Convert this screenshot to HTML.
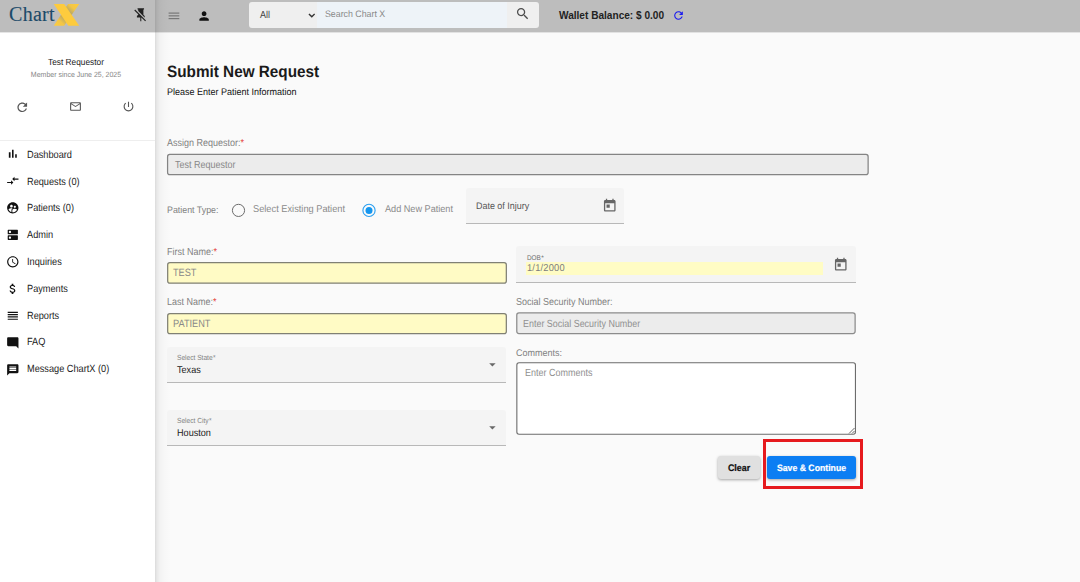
<!DOCTYPE html>
<html><head><meta charset="utf-8">
<style>
*{box-sizing:border-box;margin:0;padding:0}
html,body{width:1080px;height:582px;overflow:hidden;background:#fafafa;font-family:"Liberation Sans",sans-serif;color:#222}
.abs{position:absolute}
#top{position:absolute;left:0;top:0;width:1080px;height:33px;background:linear-gradient(#bdbdbd 0,#bdbdbd 32px,#e2e2e2 32px,#e2e2e2 33px)}
#side{position:absolute;left:0;top:32px;width:155px;height:550px;background:#fff}
#sidetop{position:absolute;left:0;top:0;width:155px;height:33px;background:linear-gradient(#bdbdbd 0,#bdbdbd 32px,#e5e5e5 32px,#e5e5e5 33px)}
#sh{position:absolute;left:155px;top:0;width:16px;height:582px;background:linear-gradient(to right,rgba(0,0,0,.125) 0,rgba(0,0,0,.07) 2px,rgba(0,0,0,.03) 5px,rgba(0,0,0,.01) 10px,rgba(0,0,0,0) 16px)}
.t{position:absolute;white-space:nowrap;line-height:1;transform:scaleY(1.07) rotate(0.03deg);transform-origin:0 85%}
svg{position:absolute;display:block}
.nav{font-size:9.200px;color:#1c1c1c;left:27px;transform:scaleY(1.13) rotate(0.03deg)}
.lbl{font-size:9px;color:#818181;transform:scaleY(1.12) rotate(0.03deg)}
.red{color:#e53935}
.inp{position:absolute;border:1px solid #767676;border-radius:2px;height:21px}
</style></head><body>
<div id="top"></div>
<div id="side"></div>
<div id="sidetop"></div>
<div id="sh"></div>

<!-- logo -->
<div class="t" style="transform:none;left:9px;top:4px;font-family:'Liberation Serif',serif;font-size:20px;color:#1b4a69;letter-spacing:0.3px;-webkit-text-stroke:0.120px #1b4a69">Chart</div>
<svg style="left:53px;top:3px" width="28" height="24" viewBox="53 3 28 24"><defs><linearGradient id="g1" gradientUnits="userSpaceOnUse" x1="56" y1="25.800" x2="77" y2="3.500"><stop offset="0" stop-color="#fdcb3e"/><stop offset=".2" stop-color="#f3c646"/><stop offset=".42" stop-color="#a9a070"/><stop offset=".58" stop-color="#a9a070"/><stop offset=".8" stop-color="#f3c646"/><stop offset="1" stop-color="#fdcb3e"/></linearGradient></defs><path d="M53.750 25.800 L68 3.900 L79.200 3.900 L64.200 25.800 Z" fill="url(#g1)"/><path d="M53.750 3.900 L64.200 3.900 L79.200 25.800 L68.300 25.800 Z" fill="#fdcb3e"/></svg>
<!-- pin off -->
<svg style="left:133.3px;top:6.6px" width="15.6" height="15.6" viewBox="0 0 24 24"><path fill="#222" d="M2 5.27L3.28 4 20 20.72 18.73 22l-5.93-5.93V22h-1.6v-6H6v-2l2-2v-.73l-6-6zM16 12l2 2v2h-.18L8 6.18V4H7V2h10v2h-1v8z"/></svg>

<!-- topbar -->
<svg style="left:167px;top:10px" width="14" height="12" viewBox="167 10 14 12"><rect x="168.6" y="12.6" width="10.7" height="0.95" fill="#666"/><rect x="168.6" y="15.4" width="10.7" height="0.95" fill="#666"/><rect x="168.6" y="18.2" width="10.7" height="0.95" fill="#666"/></svg>
<svg style="left:197.3px;top:8.8px" width="14.2" height="14.2" viewBox="0 0 24 24"><path fill="#111" d="M12 12c2.21 0 4-1.79 4-4s-1.79-4-4-4-4 1.790-4 4 1.790 4 4 4zm0 2c-2.670 0-8 1.340-8 4v2h16v-2c0-2.660-5.330-4-8-4z"/></svg>
<div class="abs" style="left:249px;top:2px;width:290px;height:26px;background:#efefef;border-radius:3px"></div>
<div class="abs" style="left:317px;top:2px;width:190px;height:26px;background:#eef3f8"></div>
<div class="t" style="transform:scaleY(1.12) rotate(0.03deg);left:260px;top:11.2px;font-size:9px;color:#444">All</div>
<svg style="left:307.6px;top:12.8px" width="7.6" height="5.7" viewBox="0 0 8 6"><path d="M1 1l3 3 3-3" stroke="#333" stroke-width="1.5" fill="none"/></svg>
<div class="t" style="left:324.500px;top:9.500px;font-size:8.800px;color:#888">Search Chart X</div>
<svg style="left:515.3px;top:5.7px" width="15.4" height="15.4" viewBox="0 0 24 24"><path fill="#4c4c4c" d="M15.5 14h-.79l-.28-.27C15.410 12.590 16 11.110 16 9.500 16 5.910 13.090 3 9.500 3S3 5.910 3 9.500 5.910 16 9.500 16c1.610 0 3.090-.59 4.230-1.570l.27.28v.79l5 4.990L20.490 19l-4.990-5zm-6 0C7.010 14 5 11.990 5 9.500S7.010 5 9.500 5 14 7.010 14 9.500 11.990 14 9.500 14z"/></svg>
<div class="t" style="transform:none;left:559px;top:10.7px;font-size:10.100px;font-weight:bold;color:#222">Wallet Balance: $ 0.00</div>
<svg style="left:672px;top:9px" width="13" height="13" viewBox="0 0 24 24"><path fill="#1a1af0" d="M17.650 6.350C16.200 4.900 14.210 4 12 4c-4.420 0-7.990 3.580-7.990 8s3.570 8 7.990 8c3.730 0 6.840-2.550 7.730-6h-2.080c-.82 2.330-3.040 4-5.650 4-3.310 0-6-2.690-6-6s2.690-6 6-6c1.660 0 3.140.69 4.220 1.780L13 11h7V4l-2.350 2.350z"/></svg>

<!-- sidebar profile -->
<div class="t" style="left:0;width:152px;text-align:center;top:58px;font-size:8.300px;color:#222">Test Requestor</div>
<div class="t" style="left:0;width:152px;text-align:center;top:71px;font-size:7px;color:#858585">Member since June 25, 2025</div>
<svg style="left:15.2px;top:99.6px" width="14.5" height="14.5" viewBox="0 0 24 24"><path fill="#555" d="M17.650 6.350C16.200 4.900 14.210 4 12 4c-4.420 0-7.990 3.580-7.990 8s3.570 8 7.990 8c3.730 0 6.840-2.550 7.730-6h-2.080c-.82 2.330-3.040 4-5.650 4-3.310 0-6-2.690-6-6s2.690-6 6-6c1.660 0 3.140.69 4.220 1.780L13 11h7V4l-2.350 2.350z"/></svg>
<svg style="left:69px;top:100.2px" width="13" height="13" viewBox="0 0 24 24"><path fill="#555" d="M20 4H4c-1.100 0-1.990.9-1.990 2L2 18c0 1.100.9 2 2 2h16c1.100 0 2-.9 2-2V6c0-1.100-.9-2-2-2zm0 14H4V8l8 5 8-5v10zm-8-7L4 6h16l-8 5z"/></svg>
<svg style="left:122px;top:100px" width="13" height="13" viewBox="0 0 24 24"><path fill="#555" d="M13 3h-2v10h2V3zm4.830 2.170l-1.420 1.420C17.990 7.860 19 9.810 19 12c0 3.870-3.130 7-7 7s-7-3.130-7-7c0-2.190 1.010-4.140 2.580-5.420L6.170 5.170C4.230 6.820 3 9.260 3 12c0 4.970 4.030 9 9 9s9-4.030 9-9c0-2.740-1.230-5.180-3.170-6.830z"/></svg>
<div class="abs" style="left:0;top:140px;width:155px;height:1px;background:#eee"></div>

<!-- nav -->
<div class="t nav" style="top:150.8px">Dashboard</div>
<div class="t nav" style="top:177.6px">Requests (0)</div>
<div class="t nav" style="top:204.4px">Patients (0)</div>
<div class="t nav" style="top:231.2px">Admin</div>
<div class="t nav" style="top:258.0px">Inquiries</div>
<div class="t nav" style="top:284.8px">Payments</div>
<div class="t nav" style="top:311.6px">Reports</div>
<div class="t nav" style="top:338.4px">FAQ</div>
<div class="t nav" style="top:365.2px">Message ChartX (0)</div>

<svg style="left:5.900px;top:147.30px" width="13.600" height="13.600" viewBox="0 0 24 24"><path fill="#111" d="M5 9.200h3V19H5zM10.600 5h2.800v14h-2.800zm5.600 8H19v6h-2.800z"/></svg>
<svg style="left:5.900px;top:174.20px" width="13.600" height="13.600" viewBox="0 0 24 24"><path fill="#111" d="M9.010 14H2v2h7.010v3L13 15l-3.990-4v3zm5.980-1v-3H22V8h-7.010V5L11 9l3.990 4z"/></svg>
<svg style="left:5.9px;top:201.10px" width="13.6" height="13.6" viewBox="0 0 24 24"><path fill="#111" d="M11.99 2c-5.52 0-10 4.48-10 10s4.48 10 10 10 10-4.48 10-10-4.48-10-10-10zm3.61 6.34c1.07 0 1.93.86 1.93 1.93 0 1.07-.86 1.93-1.93 1.93-1.07 0-1.93-.86-1.93-1.93-.01-1.07.86-1.93 1.93-1.93zm-6-1.58c1.3 0 2.36 1.06 2.36 2.36 0 1.3-1.06 2.36-2.36 2.36s-2.36-1.06-2.36-2.36c0-1.31 1.05-2.36 2.36-2.36zm0 9.13v3.75c-2.4-.75-4.3-2.6-5.140-4.960 1.05-1.12 3.67-1.69 5.140-1.690.53 0 1.2.08 1.9.22-1.640.87-1.9 2.020-1.9 2.680zM11.99 20c-.27 0-.53-.01-.79-.04v-4.070c0-1.420 2.940-2.130 4.400-2.130 1.070 0 2.920.39 3.840 1.150-1.170 2.970-4.060 5.090-7.450 5.090z"/></svg>
<svg style="left:5.900px;top:228.00px" width="13.600" height="13.600" viewBox="0 0 24 24"><path fill="#111" d="M20 13H4c-.55 0-1 .45-1 1v6c0 .55.45 1 1 1h16c.55 0 1-.45 1-1v-6c0-.55-.45-1-1-1zM7 19c-1.100 0-2-.9-2-2s.9-2 2-2 2 .9 2 2-.9 2-2 2zM20 3H4c-.55 0-1 .45-1 1v6c0 .55.45 1 1 1h16c.55 0 1-.45 1-1V4c0-.55-.45-1-1-1zM7 9c-1.100 0-2-.9-2-2s.9-2 2-2 2 .9 2 2-.9 2-2 2z"/></svg>
<svg style="left:5.900px;top:254.90px" width="13.600" height="13.600" viewBox="0 0 24 24"><path fill="#111" d="M11.990 2C6.470 2 2 6.480 2 12s4.470 10 9.990 10C17.520 22 22 17.520 22 12S17.520 2 11.990 2zM12 20c-4.420 0-8-3.580-8-8s3.580-8 8-8 8 3.580 8 8-3.580 8-8 8zm.5-13H11v6l5.250 3.150.75-1.230-4.500-2.670z"/></svg>
<svg style="left:5.900px;top:281.80px" width="13.600" height="13.600" viewBox="0 0 24 24"><path fill="#111" d="M11.800 10.900c-2.270-.59-3-1.200-3-2.150 0-1.090 1.010-1.850 2.700-1.850 1.780 0 2.440.85 2.500 2.100h2.210c-.07-1.720-1.120-3.300-3.210-3.810V3h-3v2.160c-1.940.42-3.500 1.680-3.500 3.610 0 2.310 1.910 3.460 4.700 4.130 2.500.6 3 1.480 3 2.410 0 .69-.49 1.790-2.700 1.790-2.060 0-2.870-.92-2.980-2.100h-2.200c.12 2.190 1.760 3.420 3.680 3.830V21h3v-2.150c1.950-.37 3.500-1.500 3.500-3.550 0-2.840-2.430-3.810-4.700-4.400z"/></svg>
<svg style="left:5.900px;top:308.70px" width="13.600" height="13.600" viewBox="0 0 24 24"><path fill="#111" d="M3 15h18v-2H3v2zm0 4h18v-2H3v2zm0-8h18V9H3v2zm0-6v2h18V5H3z"/></svg>
<svg style="left:5.900px;top:335.60px" width="13.600" height="13.600" viewBox="0 0 24 24"><path fill="#111" d="M22 4c0-1.100-.9-2-2-2H4c-1.100 0-2 .9-2 2v12c0 1.100.9 2 2 2h14l4 4V4z"/></svg>
<svg style="left:5.900px;top:362.50px" width="13.600" height="13.600" viewBox="0 0 24 24"><path fill="#111" d="M20 2H4c-1.100 0-1.990.9-1.990 2L2 22l4-4h14c1.100 0 2-.9 2-2V4c0-1.100-.9-2-2-2zm-2 12H6v-2h12v2zm0-3H6V9h12v2zm0-3H6V6h12v2z"/></svg>

<!-- main -->
<div class="t" style="left:167px;top:64px;font-size:15.300px;font-weight:bold;color:#1a1a1a">Submit New Request</div>
<div class="t" style="left:167px;top:87.500px;font-size:9px;color:#111">Please Enter Patient Information</div>

<div class="t lbl" style="left:167px;top:139px">Assign Requestor:<span class="red">*</span></div>
<svg style="left:164px;top:151px" width="707" height="27" viewBox="164 151 707 27"><rect x="167.58" y="154.48" width="700.55" height="20.15" rx="2.2" fill="#ececec" stroke="#848484" stroke-width="1.25"/></svg>
<div class="t" style="transform:scaleY(1.15) rotate(0.03deg);left:175px;top:160.500px;font-size:9px;color:#888">Test Requestor</div>

<div class="t lbl" style="transform:scaleY(1.07) rotate(0.03deg);left:167px;top:205.500px;font-size:8.850px">Patient Type:</div>
<svg style="left:230px;top:202px" width="17" height="17" viewBox="230 202 17 17"><circle cx="238.5" cy="210.4" r="6.1" fill="none" stroke="#6c6c6c" stroke-width="1"/></svg>
<div class="t" style="transform:scaleY(1.07) rotate(0.03deg);left:253px;top:204.5px;font-size:9.250px;color:#8a8a8a">Select Existing Patient</div>
<svg style="left:360px;top:202px" width="18" height="17" viewBox="360 202 18 17"><circle cx="369" cy="210.4" r="6.1" fill="none" stroke="#2a9ff0" stroke-width="1.1"/><circle cx="369" cy="210.4" r="3.5" fill="#1596ee"/></svg>
<div class="t" style="transform:scaleY(1.07) rotate(0.03deg);left:385px;top:204.5px;font-size:9.150px;color:#8a8a8a">Add New Patient</div>
<div class="abs" style="left:466px;top:188px;width:158px;height:36px;background:#f4f4f4;border-bottom:1px solid #b8b8b8;border-radius:3px 3px 0 0"></div>
<div class="t" style="left:476px;top:202px;font-size:8.950px;color:#555">Date of Injury</div>
<svg style="left:601.9px;top:198.4px" width="15.5" height="15.5" viewBox="0 0 24 24"><path fill="#666" d="M19 3h-1V1h-2v2H8V1H6v2H5c-1.11 0-1.99.9-1.99 2L3 19c0 1.1.89 2 2 2h14c1.1 0 2-.9 2-2V5c0-1.1-.9-2-2-2zm0 16H5V8h14v11zM7 10h5v5H7z"/></svg>

<div class="t lbl" style="left:167px;top:248px">First Name:<span class="red">*</span></div>
<svg style="left:165px;top:259px" width="345" height="27" viewBox="165 259 345 27"><rect x="167.68" y="262.57" width="338.65" height="20.65" rx="2.2" fill="#fffbc5" stroke="#808074" stroke-width="1.25"/></svg>
<div class="t" style="transform:scaleY(1.15) rotate(0.03deg);left:172.800px;top:269px;font-size:9.200px;color:#888">TEST</div>
<div class="t lbl" style="left:167px;top:298px">Last Name:<span class="red">*</span></div>
<svg style="left:165px;top:310px" width="345" height="27" viewBox="165 310 345 27"><rect x="167.68" y="313.57" width="338.65" height="20.05" rx="2.2" fill="#fffbc5" stroke="#808074" stroke-width="1.25"/></svg>
<div class="t" style="transform:scaleY(1.15) rotate(0.03deg);left:172.800px;top:320px;font-size:9.200px;color:#888">PATIENT</div>

<div class="abs" style="left:516px;top:246px;width:340px;height:37px;background:#f4f4f4;border-bottom:1px solid #b8b8b8;border-radius:3px 3px 0 0"></div>
<div class="t" style="left:526.5px;top:254.7px;font-size:6.400px;color:#707070">DOB<span style="margin-left:.4px">*</span></div>
<div class="abs" style="left:526px;top:262px;width:297px;height:13px;background:#fffcc4"></div>
<div class="t" style="left:527px;top:264px;font-size:9.300px;color:#7c7c7c;letter-spacing:.2px">1/1/2000</div>
<svg style="left:833.1px;top:257px" width="15.5" height="15.5" viewBox="0 0 24 24"><path fill="#666" d="M19 3h-1V1h-2v2H8V1H6v2H5c-1.11 0-1.99.9-1.99 2L3 19c0 1.1.89 2 2 2h14c1.1 0 2-.9 2-2V5c0-1.1-.9-2-2-2zm0 16H5V8h14v11zM7 10h5v5H7z"/></svg>

<div class="t lbl" style="left:516px;top:297.700px">Social Security Number:</div>
<svg style="left:514px;top:310px" width="344" height="27" viewBox="514 310 344 27"><rect x="516.77" y="312.78" width="338.35" height="20.75" rx="2.2" fill="#ececec" stroke="#8c8c8c" stroke-width="1.25"/></svg>
<div class="t" style="transform:scaleY(1.15) rotate(0.03deg);left:523px;top:319.500px;font-size:8.950px;color:#909090">Enter Social Security Number</div>

<div class="abs" style="left:167px;top:347px;width:339px;height:36px;background:#f4f4f4;border-bottom:1px solid #b8b8b8;border-radius:3px 3px 0 0"></div>
<div class="t" style="left:177px;top:355.1px;font-size:6.600px;color:#838383;transform:scaleY(1.12) rotate(0.03deg)">Select State<span style="margin-left:.5px">*</span></div>
<div class="t" style="left:177px;top:366px;font-size:9.1px;color:#222;transform:scaleY(1.09) rotate(0.03deg)">Texas</div>
<svg style="left:489.300px;top:363px" width="7" height="4" viewBox="0 0 7 4"><path d="M0.2 0.200h6.400l-3.200 3.300z" fill="#686868"/></svg>
<div class="abs" style="left:167px;top:410px;width:339px;height:36px;background:#f4f4f4;border-bottom:1px solid #b8b8b8;border-radius:3px 3px 0 0"></div>
<div class="t" style="left:177px;top:418.1px;font-size:6.600px;color:#838383;transform:scaleY(1.12) rotate(0.03deg)">Select City<span style="margin-left:.5px">*</span></div>
<div class="t" style="left:177px;top:429px;font-size:9.1px;color:#222;transform:scaleY(1.09) rotate(0.03deg)">Houston</div>
<svg style="left:489.300px;top:426px" width="7" height="4" viewBox="0 0 7 4"><path d="M0.2 0.200h6.400l-3.200 3.300z" fill="#686868"/></svg>

<div class="t lbl" style="transform:scaleY(1.07) rotate(0.03deg);left:516px;top:349px;font-size:9px">Comments:</div>
<svg style="left:514px;top:360px" width="345" height="77" viewBox="514 360 345 77"><rect x="516.85" y="362.75" width="338.60" height="71.50" rx="2.2" fill="#fff" stroke="#6c6c6c" stroke-width="1.10"/></svg>
<div class="t" style="transform:scaleY(1.15) rotate(0.03deg);left:525px;top:369.2px;font-size:9px;color:#909090">Enter Comments</div>
<svg style="left:848px;top:427px" width="7" height="7" viewBox="0 0 7 7"><path d="M6.500 1L1 6.500M6.500 4L4 6.500" stroke="#666" stroke-width="1" fill="none"/></svg>

<div class="abs" style="left:718px;top:456px;width:42px;height:23px;background:#e0e0e0;border-radius:3px;box-shadow:0 1px 3px rgba(0,0,0,.35)"></div>
<div class="t" style="left:718px;width:42px;text-align:center;top:463.6px;font-size:8.900px;font-weight:bold;color:#111;-webkit-text-stroke:0.2px #111">Clear</div>
<div class="abs" style="left:767px;top:456px;width:89px;height:23px;background:#0c7ef3;border-radius:3px;box-shadow:0 1px 3px rgba(0,0,0,.35)"></div>
<div class="t" style="left:767px;width:89px;text-align:center;top:463.6px;font-size:8.700px;font-weight:bold;color:#fff;-webkit-text-stroke:0.2px #fff">Save &amp; Continue</div>
<div class="abs" style="left:763px;top:439px;width:100px;height:50px;border:3px solid #e61a1e"></div>
</body></html>
